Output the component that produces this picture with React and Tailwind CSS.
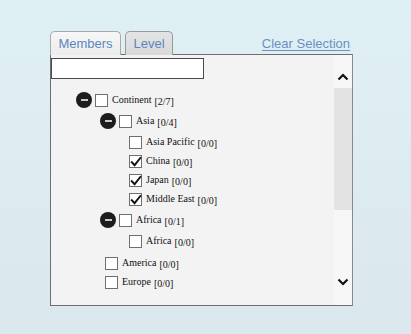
import React from "react";

const rows = [
  { label: "Continent", count: "[2/7]", exp: true, box: "ml-[25px]", mt: "mt-[11px]" },
  { label: "Asia", count: "[0/4]", exp: true, box: "ml-[49px]", mt: "mt-[1px]" },
  { label: "Asia Pacific", count: "[0/0]", leaf: true, box: "ml-[78px]", mt: "mt-[1px]" },
  { label: "China", count: "[0/0]", leaf: true, checked: true, box: "ml-[78px]", mt: "-mt-[1px]" },
  { label: "Japan", count: "[0/0]", leaf: true, checked: true, box: "ml-[78px]", mt: "-mt-[1px]" },
  { label: "Middle East", count: "[0/0]", leaf: true, checked: true, box: "ml-[78px]", mt: "-mt-[1px]" },
  { label: "Africa", count: "[0/1]", exp: true, box: "ml-[49px]", mt: "mt-[1px]" },
  { label: "Africa", count: "[0/0]", leaf: true, box: "ml-[78px]", mt: "mt-[1px]" },
  { label: "America", count: "[0/0]", leaf: true, box: "ml-[54px]", mt: "mt-[2px]" },
  { label: "Europe", count: "[0/0]", leaf: true, box: "ml-[54px]", mt: "-mt-[1px]" },
];

function Minus() {
  return (
    <span className="w-[16px] h-[16px] rounded-full bg-[#1c1c1c] flex items-center justify-center shrink-0">
      <span className="block w-[7px] h-[2px] bg-[#c8c8c8]" />
    </span>
  );
}

function Box({ checked, className = "" }) {
  return (
    <span className={"relative block w-[13px] h-[13px] bg-white border border-[#6f6f6f] shrink-0 " + className}>
      {checked && (
        <svg className="absolute left-[0px] top-[0px]" width="12" height="12" viewBox="0 0 12 12">
          <path d="M1.8 6.2 L4.6 9.2 L10.3 2" fill="none" stroke="#111" strokeWidth="1.9" strokeLinecap="square" />
        </svg>
      )}
    </span>
  );
}

export default function App() {
  return (
    <div className="w-[411px] h-[334px] bg-gradient-to-b from-[#dff0f4] to-[#dbe8ee] pt-[31px] pl-[50px] overflow-hidden" style={{ fontFamily: '"Liberation Sans", Arial, sans-serif' }}>
      <div className="w-[303px]">
        <div className="flex items-end h-[24px] relative z-10">
          <div className="w-[71px] h-[24px] rounded-t-[5px] border border-[#a9a9a9] border-b-0 bg-gradient-to-b from-[#f7f7f7] to-[#ececec] text-[13px] text-[#5b86bd] flex items-center justify-center pt-[1px]">
            Members
          </div>
          <div className="ml-[4px] w-[48px] h-[24px] rounded-t-[5px] border border-[#9a9a9a] border-b-0 bg-gradient-to-b from-[#e4e4e4] to-[#d9d9d9] text-[13px] text-[#5b86bd] flex items-center justify-center pt-[1px]">
            Level
          </div>
          <a className="ml-auto mb-[4px] mr-[3px] text-[13px] leading-[15px] text-[#6b90c1] underline underline-offset-[2px] decoration-[1px]">
            Clear Selection
          </a>
        </div>
        <div className="h-[252px] border border-[#6e6e6e] border-r-[#8a8a8a] bg-[#f3f3f3] flex -mt-[1px]">
          <div className="flex-1 relative" style={{ fontFamily: '"Liberation Serif", "Times New Roman", serif' }}>
            <input className="block mt-[3px] w-[153px] h-[21px] bg-white border border-[#4a4a4a] outline-none" />
            {rows.map((r, i) => (
              <div key={i} className={"flex items-center h-[20px] " + r.mt}>
                <div className={"flex items-center " + r.box}>
                  {r.exp ? (
                    <>
                      <Minus />
                      <Box checked={r.checked} className="ml-[3px]" />
                    </>
                  ) : (
                    <Box checked={r.checked} />
                  )}
                  <span className="ml-[4px] text-[10px] leading-[12px] text-[#111] whitespace-nowrap">{r.label}</span>
                  <span className="ml-[3px] text-[10px] leading-[12px] text-[#111] translate-y-[2px] whitespace-nowrap">{r.count}</span>
                </div>
              </div>
            ))}
          </div>
          <div className="w-[18px] bg-[#f7f7f7] flex flex-col items-center">
            <svg className="mt-[18px]" width="12" height="8" viewBox="0 0 12 8">
              <path d="M1.5 6.5 L6 2 L10.5 6.5" fill="none" stroke="#111" strokeWidth="2.2" />
            </svg>
            <div className="mt-[7px] w-full h-[122px] bg-[#e3e3e3]" />
            <svg className="mt-[68px]" width="12" height="8" viewBox="0 0 12 8">
              <path d="M1.5 1.5 L6 6 L10.5 1.5" fill="none" stroke="#111" strokeWidth="2.2" />
            </svg>
          </div>
        </div>
      </div>
    </div>
  );
}
